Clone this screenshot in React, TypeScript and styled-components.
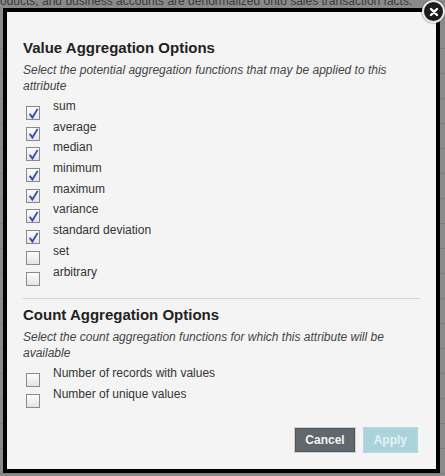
import styled, { createGlobalStyle } from "styled-components";

const GlobalStyle = createGlobalStyle`
  html, body {
    margin: 0;
    padding: 0;
    overflow: hidden;
  }
  body {
    font-family: "Liberation Sans", Arial, sans-serif;
  }
`;

const Page = styled.div`
  position: relative;
  width: 445px;
  height: 476px;
  background: #8a8a8a;
  overflow: hidden;
`;

const BackText = styled.div`
  margin-top: -6px;
  font-size: 12px;
  color: #3a3a3a;
  white-space: nowrap;
`;

const BackRows = styled.div`
  display: flex;
  flex-direction: column;
  margin-top: 16px;
`;

const BackRow = styled.div`
  height: 24px;
  border-bottom: 1px solid #7c7c7c;
`;

const Modal = styled.div`
  position: absolute;
  left: 3px;
  top: 8px;
  width: 437px;
  height: 465px;
  box-sizing: border-box;
  border: 4px solid #000;
  background: #f4f4f4;
  display: flex;
  flex-direction: column;
  padding: 0 16px;
`;

const CloseButton = styled.button`
  position: absolute;
  right: -9px;
  top: -12px;
  width: 23px;
  height: 23px;
  border-radius: 50%;
  background: #1c1c1c;
  border: 2px solid #e8e8e8;
  box-shadow: 0 0 2px rgba(0, 0, 0, 0.6);
  display: flex;
  align-items: center;
  justify-content: center;
  padding: 0;
`;

const Body = styled.div`
  flex: 1;
  padding-top: 27px;
`;

const Heading = styled.h2`
  margin: 0;
  font-size: 15px;
  font-weight: bold;
  color: #222;
  line-height: 18px;
`;

const Hint = styled.p`
  margin: 5px 0 9px;
  font-size: 12px;
  font-style: italic;
  color: #444;
  line-height: 16px;
`;

const Options = styled.div`
  display: flex;
  flex-direction: column;
`;

const Row = styled.label`
  display: flex;
  align-items: flex-start;
  height: 20.7px;
  padding-left: 3px;
`;

const Box = styled.span`
  width: 12px;
  height: 12px;
  margin-top: 3px;
  border: 1px solid #8a8a8a;
  background: linear-gradient(#fdfdfd, #e4e4e4);
  display: flex;
  align-items: center;
  justify-content: center;
  flex-shrink: 0;
`;

const LabelText = styled.span`
  margin-left: 13px;
  margin-top: -4px;
  font-size: 12px;
  color: #333;
  line-height: 14px;
`;

const Divider = styled.hr`
  margin: 9px 0 7px;
  border: none;
  border-top: 1px solid #d2d2d2;
`;

const Footer = styled.div`
  display: flex;
  justify-content: flex-end;
  gap: 7px;
  padding: 0 2px 16px 0;
`;

const Button = styled.button<{ $primary?: boolean }>`
  height: 26px;
  padding: 0 10px;
  font-family: "Liberation Sans", Arial, sans-serif;
  font-size: 12px;
  font-weight: bold;
  border: 1px solid ${(p) => (p.$primary ? "#b4dadf" : "#d0d0d0")};
  outline: ${(p) => (p.$primary ? "none" : "1px solid #50575c")};
  outline-offset: -2px;
  background: ${(p) => (p.$primary ? "#abd4da" : "#60686d")};
  color: ${(p) => (p.$primary ? "#e4f2f4" : "#f2f2f2")};
  cursor: pointer;
`;

const Check = () => (
  <svg width="11" height="11" viewBox="0 0 10 10">
    <path d="M1.5 5.2 L4 8.7 L8.8 0.8" fill="none" stroke="#2f4fb0" strokeWidth="1.7" />
  </svg>
);

const CloseIcon = () => (
  <svg width="10" height="10" viewBox="0 0 10 10">
    <path d="M2 2 L8 8 M8 2 L2 8" stroke="#fff" strokeWidth="2.4" strokeLinecap="round" />
  </svg>
);

const valueOptions = [
  { label: "sum", checked: true },
  { label: "average", checked: true },
  { label: "median", checked: true },
  { label: "minimum", checked: true },
  { label: "maximum", checked: true },
  { label: "variance", checked: true },
  { label: "standard deviation", checked: true },
  { label: "set", checked: false },
  { label: "arbitrary", checked: false },
];

const countOptions = [
  { label: "Number of records with values", checked: false },
  { label: "Number of unique values", checked: false },
];

const Option = ({ label, checked }: { label: string; checked: boolean }) => (
  <Row>
    <Box>{checked && <Check />}</Box>
    <LabelText>{label}</LabelText>
  </Row>
);

const App = () => {
  return (
    <Page>
      <GlobalStyle />
      <BackText>
        oducts, and business accounts are denormalized onto sales transaction facts.
      </BackText>
      <BackRows>
        {Array.from({ length: 18 }).map((_, i) => (
          <BackRow key={i} />
        ))}
      </BackRows>
      <Modal>
        <CloseButton>
          <CloseIcon />
        </CloseButton>
        <Body>
          <Heading>Value Aggregation Options</Heading>
          <Hint>Select the potential aggregation functions that may be applied to this attribute</Hint>
          <Options>
            {valueOptions.map((o) => (
              <Option key={o.label} {...o} />
            ))}
          </Options>
          <Divider />
          <Heading>Count Aggregation Options</Heading>
          <Hint>Select the count aggregation functions for which this attribute will be available</Hint>
          <Options>
            {countOptions.map((o) => (
              <Option key={o.label} {...o} />
            ))}
          </Options>
        </Body>
        <Footer>
          <Button>Cancel</Button>
          <Button $primary>Apply</Button>
        </Footer>
      </Modal>
    </Page>
  );
};

export default App;
